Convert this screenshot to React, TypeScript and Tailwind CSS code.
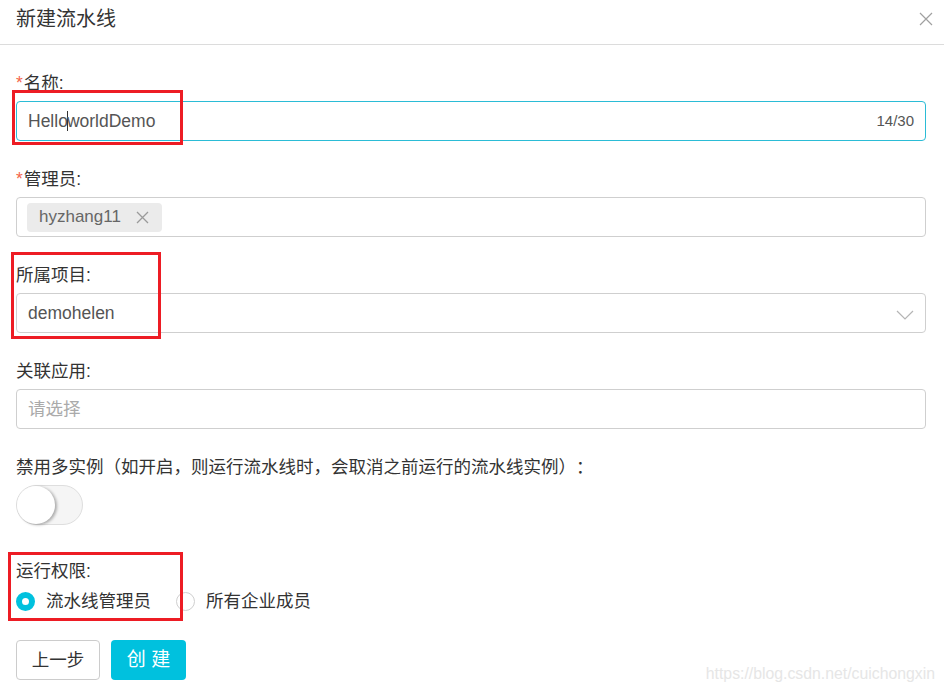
import React from "react";

const FONT = '"Liberation Sans", "Noto Sans CJK SC", Arial, sans-serif';

function Label({ text, required }: { text: string; required?: boolean }) {
  return (
    <div className="h-6 leading-6 text-[17.5px] text-[#333] mb-[7px] flex items-center pt-[1px]">
      {required && <span className="text-[#f4664a] mr-[1px]">*</span>}
      <span>{text}</span>
    </div>
  );
}

export default function App() {
  return (
    <div
      className="relative w-[944px] h-[693px] bg-white overflow-hidden [text-spacing-trim:space-all]"
      style={{ fontFamily: FONT }}
    >
      {/* header */}
      <div className="h-[45px] border-b border-[#dcdcdc] flex items-center justify-between pl-4 pr-[11px]">
        <div className="text-[20px] text-[#333] leading-none -mt-[6px]">新建流水线</div>
        <svg width="14" height="14" viewBox="0 0 14 14" className="-mt-[7px]">
          <path d="M1 1L13 13M13 1L1 13" stroke="#a0a0a0" strokeWidth="1.2" />
        </svg>
      </div>

      {/* form */}
      <div className="pt-[25px] pl-4 pr-[18px]">
        {/* name */}
        <div className="mb-[25px]">
          <Label text="名称:" required />
          <div className="h-10 rounded-[4px] border border-[#2bbcd6] flex items-center pl-[11px] pr-[11px] justify-between">
            <div className="text-[17.5px] text-[#555] flex items-center">
              <span>Hello</span>
              <span className="inline-block w-px h-[20px] bg-[#333] -mx-[1px]"></span>
              <span>worldDemo</span>
            </div>
            <div className="text-[15px] text-[#555]">14/30</div>
          </div>
        </div>

        {/* admin */}
        <div className="mb-[25px]">
          <Label text="管理员:" required />
          <div className="h-10 rounded-[4px] border border-[#cfcfcf] flex items-center pl-[10px]">
            <div className="h-[29px] rounded-[4px] bg-[#ebebeb] flex items-center pl-3 pr-[13px] gap-[15px]">
              <span className="text-[17px] text-[#666]">hyzhang11</span>
              <svg width="13" height="13" viewBox="0 0 13 13">
                <path d="M1 1L12 12M12 1L1 12" stroke="#9a9a9a" strokeWidth="1.3" />
              </svg>
            </div>
          </div>
        </div>

        {/* project */}
        <div className="mb-[25px]">
          <Label text="所属项目:" />
          <div className="h-10 rounded-[4px] border border-[#cfcfcf] flex items-center pl-[11px] pr-[11px] justify-between">
            <span className="text-[17.5px] text-[#555]">demohelen</span>
            <svg width="18" height="10" viewBox="0 0 18 10" className="mt-[3px]">
              <path d="M1 1L9 9L17 1" stroke="#b5b5b5" strokeWidth="1.2" fill="none" />
            </svg>
          </div>
        </div>

        {/* app */}
        <div className="mb-[25px]">
          <Label text="关联应用:" />
          <div className="h-10 rounded-[4px] border border-[#cfcfcf] flex items-center pl-[11px]">
            <span className="text-[17.5px] text-[#aaa]">请选择</span>
          </div>
        </div>

        {/* disable multi */}
        <div className="mb-[33px]">
          <Label text="禁用多实例（如开启，则运行流水线时，会取消之前运行的流水线实例）：" />
          <div className="w-[67px] h-10 rounded-full border border-[#dedede] bg-[#f5f5f5] relative">
            <div className="absolute left-0 top-0 w-[38px] h-[38px] rounded-full bg-white shadow-[2px_1px_3px_rgba(0,0,0,0.3)]"></div>
          </div>
        </div>

        {/* run permission */}
        <div className="mb-[27px]">
          <Label text="运行权限:" />
          <div className="flex items-center h-6 text-[17.5px] text-[#333] pt-[1px]">
            <span className="w-[19px] h-[19px] rounded-full border-[6px] border-[#00c1de] bg-white box-border"></span>
            <span className="ml-[11px]">流水线管理员</span>
            <span className="ml-[25px] w-[19px] h-[19px] rounded-full border border-[#cfcfcf] bg-white box-border"></span>
            <span className="ml-[11px]">所有企业成员</span>
          </div>
        </div>

        {/* buttons */}
        <div className="flex gap-[11px]">
          <button className="w-[84px] h-10 rounded-[4px] border border-[#cccccc] bg-white text-[17.5px] text-[#333]">
            上一步
          </button>
          <button className="w-[75px] h-10 rounded-[4px] bg-[#00c1de] text-[19px] text-white tracking-[0.3em] pl-[0.3em]">
            创建
          </button>
        </div>
      </div>

      {/* watermark */}
      <div className="absolute right-[9px] bottom-[7px] text-[15.8px] text-[#e6e6e6]">
        https://blog.csdn.net/cuichongxin
      </div>

      {/* red annotation boxes */}
      <div className="absolute left-[12px] top-[90px] w-[171px] h-[55px] border-[3px] border-[#ed1c24]"></div>
      <div className="absolute left-[11px] top-[252px] w-[150px] h-[87px] border-[3px] border-[#ed1c24]"></div>
      <div className="absolute left-[8px] top-[552px] w-[175px] h-[69px] border-[3px] border-[#ed1c24]"></div>
    </div>
  );
}
